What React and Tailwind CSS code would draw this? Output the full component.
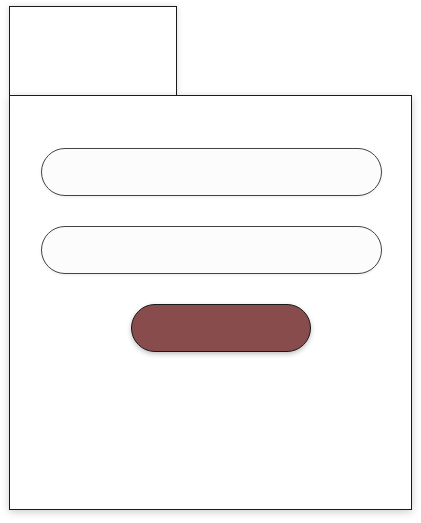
import React from "react";

const App = () => {
  return (
    <div className="min-h-[523px] w-[421px] bg-white pl-[9px] pt-[6px]">
      {/* Tab */}
      <div className="w-[168px] h-[89px] border border-b-0 border-[#1a1a1a] bg-white shadow-[0_0_6px_rgba(0,0,0,0.15)]" />

      {/* Panel */}
      <div className="w-[403px] h-[415px] border border-[#1a1a1a] bg-white shadow-[0_2px_8px_rgba(0,0,0,0.2)] pt-[52px] pl-[31px] flex flex-col gap-[30px]">
        <div className="w-[341px] h-[48px] rounded-full border border-[#444] bg-[#fcfcfc] shadow-[0_1px_3px_rgba(0,0,0,0.08)]" />
        <div className="w-[341px] h-[48px] rounded-full border border-[#444] bg-[#fcfcfc] shadow-[0_1px_3px_rgba(0,0,0,0.08)]" />
        <button className="ml-[90px] w-[180px] h-[48px] rounded-full border border-[#1a1a1a] bg-[#884c4c] shadow-[0_2px_5px_rgba(0,0,0,0.25)]" />
      </div>
    </div>
  );
};

export default App;
